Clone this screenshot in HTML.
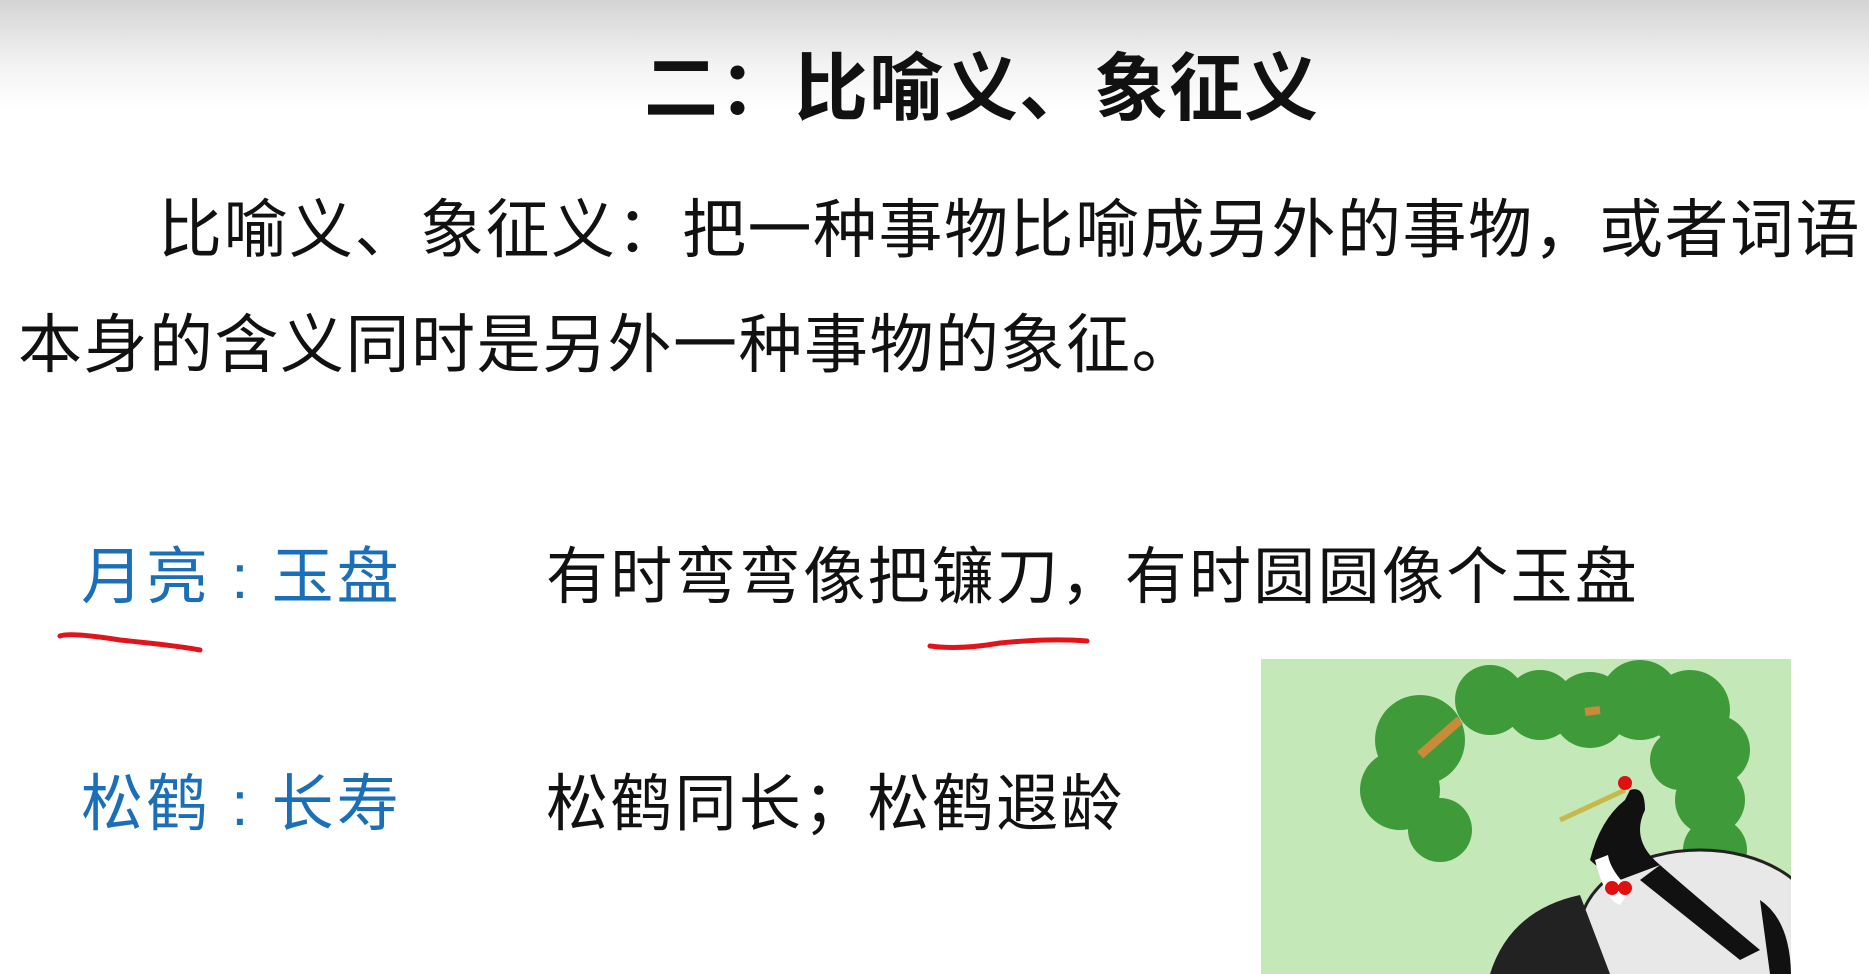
<!DOCTYPE html>
<html><head><meta charset="utf-8"><style>
html,body{margin:0;padding:0}
body{width:1869px;height:974px;overflow:hidden;position:relative;background:#fff;font-family:"Liberation Sans","Noto Sans CJK SC",sans-serif;color:#111}
.top{position:absolute;left:0;top:0;width:1869px;height:110px;background:linear-gradient(#d4d4d4,#f3f3f3 60%,#fff)}
.t{position:absolute;white-space:nowrap;line-height:1}
.title{left:644px;top:52px;font-size:74px;font-weight:bold;letter-spacing:1px}
.p1{left:158px;top:198px;font-size:64px;letter-spacing:1.5px}
.p2{left:18px;top:313px;font-size:64px;letter-spacing:1.5px}
.b{color:#1a6fb8;font-size:62px;letter-spacing:3px}
.r{font-size:62px;letter-spacing:2.3px}
</style></head><body>
<div class="top"></div>
<div class="t title">二：比喻义、象征义</div>
<div class="t p1">比喻义、象征义：把一种事物比喻成另外的事物，或者词语</div>
<div class="t p2">本身的含义同时是另外一种事物的象征。</div>
<div class="t b" style="left:81px;top:547px">月亮 : 玉盘</div>
<div class="t r" style="left:546px;top:547px">有时弯弯像把镰刀，有时圆圆像个玉盘</div>
<div class="t b" style="left:81px;top:774px">松鹤 : 长寿</div>
<div class="t r" style="left:546px;top:774px">松鹤同长；松鹤遐龄</div>
<svg style="position:absolute;left:0;top:0" width="1869" height="974">
<defs><clipPath id="c"><rect x="1261" y="659" width="530" height="315"/></clipPath></defs>
<path d="M60 636 Q70 632 120 640 Q180 646 200 650" stroke="#e0141a" stroke-width="5" fill="none" stroke-linecap="round"/>
<path d="M930 646 Q960 650 1000 643 Q1050 638 1087 641" stroke="#e0141a" stroke-width="5" fill="none" stroke-linecap="round"/>
<rect x="1261" y="659" width="530" height="315" fill="#c4e8b8"/>
<g clip-path="url(#c)">
<g fill="#3f9a3a">
<circle cx="1420" cy="740" r="45"/><circle cx="1400" cy="790" r="40"/><circle cx="1440" cy="830" r="32"/>
<circle cx="1490" cy="700" r="35"/><circle cx="1540" cy="705" r="35"/><circle cx="1590" cy="710" r="38"/>
<circle cx="1640" cy="700" r="40"/><circle cx="1690" cy="710" r="40"/><circle cx="1715" cy="750" r="35"/>
<circle cx="1710" cy="800" r="35"/><circle cx="1715" cy="850" r="32"/><circle cx="1680" cy="760" r="30"/>
</g>
<path d="M1420 755 L1460 720" stroke="#c98a3a" stroke-width="9"/>
<path d="M1585 712 L1600 710" stroke="#c98a3a" stroke-width="8"/>
<ellipse cx="1700" cy="930" rx="120" ry="80" fill="#e8e8e8" stroke="#222" stroke-width="3"/>
<path d="M1630 790 Q1645 785 1645 810 Q1630 840 1660 865 L1620 880 Q1600 870 1590 860 Q1600 820 1625 800Z" fill="#111"/>
<path d="M1595 860 Q1605 900 1620 905 L1630 890 Q1610 870 1608 855Z" fill="#fff"/>
<path d="M1660 865 Q1700 900 1760 950 L1740 960 Q1690 920 1640 880Z" fill="#111"/>
<path d="M1560 820 L1625 790" stroke="#c8b84a" stroke-width="5"/>
<path d="M1490 974 Q1510 910 1580 895 L1610 974Z" fill="#222"/>
<path d="M1760 900 Q1790 920 1791 974 L1770 974Z" fill="#111"/>
<circle cx="1625" cy="783" r="7" fill="#e01010"/><circle cx="1612" cy="888" r="7" fill="#e01010"/><circle cx="1625" cy="888" r="7" fill="#e01010"/>
</g>
</svg>
</body></html>
